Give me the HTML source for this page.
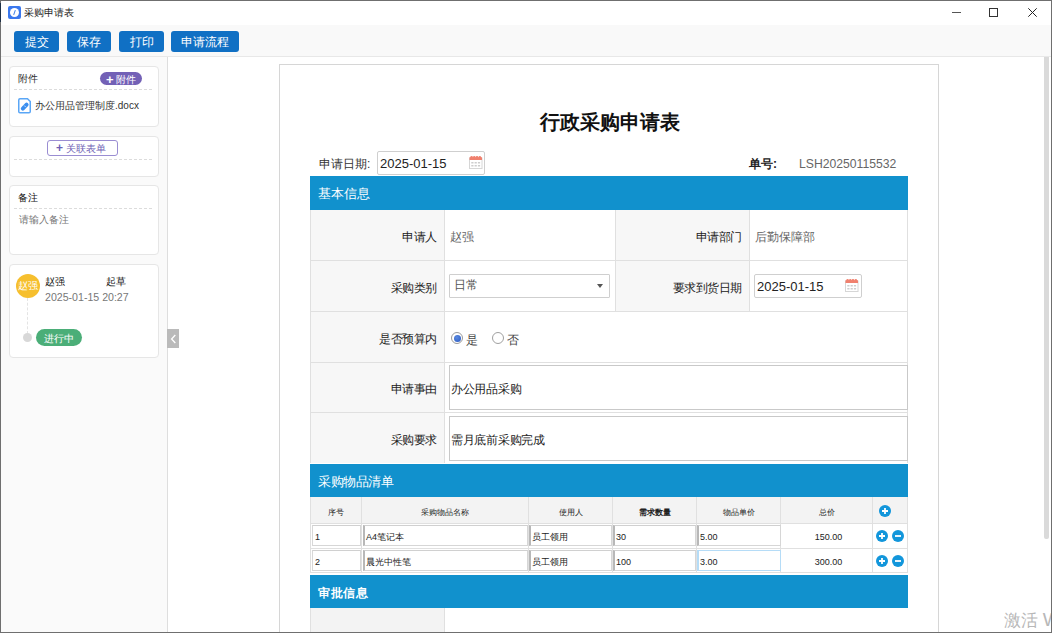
<!DOCTYPE html>
<html><head><meta charset="utf-8">
<style>
*{box-sizing:border-box;margin:0;padding:0}
html,body{width:1052px;height:633px;overflow:hidden;background:#fff}
body{position:relative;font-family:"Liberation Sans",sans-serif;font-size:12px;color:#333}
.a{position:absolute}
.t{position:absolute;white-space:nowrap;line-height:1}
#frame{left:0;top:0;width:1052px;height:633px;border:1px solid #6f6f6f;z-index:50;pointer-events:none}
#titlebar{left:1px;top:1px;width:1049px;height:24px;background:#fff}
#toolbar{left:1px;top:25px;width:1050px;height:32px;background:#f9f9f9;border-bottom:1px solid #e8e8e8}
.btn{position:absolute;top:31px;height:21px;background:#1070c4;border-radius:3px;color:#fff;font-size:12px;font-weight:500;line-height:23px;text-align:center}
#sidebar{left:1px;top:57px;width:167px;height:575px;background:#fafafa;border-right:1px solid #dedede}
.card{position:absolute;left:9px;width:150px;background:#fff;border:1px solid #e6e6e6;border-radius:4px}
.dash{position:absolute;left:4px;right:4px;height:0;border-top:1px dashed #dcdcdc}
#main{left:168px;top:57px;width:882px;height:575px;background:#fff}
#page{left:279px;top:64px;width:660px;height:600px;border:1px solid #d6d6d6;background:#fff}
.hdr{position:absolute;left:310px;width:598px;background:#1191cd;color:#fff;font-size:13px}
.lbl{background:#f7f7f7}
.ln{position:absolute;background:#e0e0e0}
.inp{border:1px solid #cfcfcf;border-radius:2px;background:#fff}
.ta{border:1px solid #c9c9c9;background:#fff}
.r{text-align:right;font-size:12px;letter-spacing:-0.45px;color:#222}
.v{font-size:12px;color:#666}
.th{text-align:center;font-size:8.3px;color:#222;font-weight:500}
.td{font-size:9px;color:#222;margin-top:1px}
.th{top:508px !important}
.ci{border:1px solid #d6d6d6;border-left:2px solid #b8b8b8;border-top-color:#d0d0d0;background:#fff}
</style></head><body>
<div id="frame" class="a"></div>
<div id="titlebar" class="a"></div>
<div class="a" style="left:0;top:3px;width:1px;height:19px;background:#1d3047;z-index:60"></div>
<!-- app icon -->
<div class="a" style="left:8px;top:6px;width:13px;height:13px;background:#3a78ee;border-radius:2px"></div>
<div class="a" style="left:10px;top:8px;width:9px;height:9px;background:#fff;border-radius:50%"></div>
<div class="a" style="left:14px;top:10px;width:1.2px;height:5px;background:#3d7ee8;transform:rotate(20deg)"></div>
<div class="t" style="left:24px;top:8px;font-size:10px;color:#222">采购申请表</div>
<!-- window controls -->
<div class="a" style="left:952px;top:12px;width:9px;height:1.3px;background:#555"></div>
<div class="a" style="left:989px;top:8px;width:9px;height:9px;border:1px solid #333"></div>
<svg class="a" style="left:1027px;top:7px" width="11" height="11" viewBox="0 0 11 11"><path d="M1.3 1.3L9.7 9.7M9.7 1.3L1.3 9.7" stroke="#222" stroke-width="1"/></svg>

<div id="toolbar" class="a"></div>
<div class="btn" style="left:14px;width:45px">提交</div>
<div class="btn" style="left:67px;width:44px">保存</div>
<div class="btn" style="left:119px;width:45px">打印</div>
<div class="btn" style="left:171px;width:68px">申请流程</div>

<div id="sidebar" class="a"></div>
<!-- card1 -->
<div class="card" style="top:66px;height:61px"></div>
<div class="t" style="left:18px;top:74px;color:#333;font-size:10px">附件</div>
<div class="a" style="left:100px;top:72px;width:42px;height:13px;border-radius:7px;background:#7361b6"></div>
<div class="t" style="left:106px;top:73px;color:#fff;font-size:10px;font-weight:500"><b style="font-size:13px;vertical-align:-1px">+</b> 附件</div>
<div class="a" style="left:14px;top:89px;width:140px;height:1px;background:repeating-linear-gradient(90deg,#dcdcdc 0 3px,transparent 3px 5px)"></div>
<svg class="a" style="left:18px;top:98px" width="14" height="16" viewBox="0 0 14 16"><path d="M2 0.75H9.5L12.25 3.5V13.5Q12.25 14.75 11 14.75H2Q0.75 14.75 0.75 13.5V2Q0.75 0.75 2 0.75Z" fill="#fff" stroke="#5aa6f6" stroke-width="1.5"/><path d="M4.8 10.6L8.6 6.6" stroke="#3b8ff0" stroke-width="4" stroke-linecap="round"/><path d="M6.3 7.6L7.6 8.9" stroke="#fff" stroke-width="0.8"/></svg>
<div class="t" style="left:35px;top:101px;color:#333;font-size:10px">办公用品管理制度.docx</div>
<!-- card2 -->
<div class="card" style="top:136px;height:41px"></div>
<div class="a" style="left:47px;top:140px;width:71px;height:16px;border:1px solid #9a8dd2;border-radius:3px;background:#fff"></div>
<div class="t" style="left:56px;top:142px;color:#6f5fb5;font-size:10px"><b style="font-size:12px">+</b> 关联表单</div>
<div class="a" style="left:14px;top:159px;width:140px;height:1px;background:repeating-linear-gradient(90deg,#dcdcdc 0 3px,transparent 3px 5px)"></div>
<!-- card3 -->
<div class="card" style="top:185px;height:70px"></div>
<div class="t" style="left:18px;top:193px;color:#111;font-weight:500;font-size:10px">备注</div>
<div class="a" style="left:14px;top:208px;width:140px;height:1px;background:repeating-linear-gradient(90deg,#dcdcdc 0 3px,transparent 3px 5px)"></div>
<div class="t" style="left:19px;top:215px;color:#777;font-size:10px">请输入备注</div>
<!-- card4 -->
<div class="card" style="top:264px;height:94px"></div>
<div class="a" style="left:16px;top:274px;width:24px;height:24px;border-radius:50%;background:#f6bf2e"></div>
<div class="t" style="left:18px;top:281px;color:#fff;font-size:10px;font-weight:500;letter-spacing:-0.5px">赵强</div>
<div class="a" style="left:27px;top:298px;width:0;height:36px;border-left:1px dashed #e4e4e4"></div>
<div class="a" style="left:23px;top:333px;width:9px;height:9px;border-radius:50%;background:#d8d8d8"></div>
<div class="t" style="left:45px;top:277px;color:#111;font-size:10px;font-weight:500">赵强</div>
<div class="t" style="left:106px;top:277px;color:#111;font-size:10px;font-weight:500">起草</div>
<div class="t" style="left:45px;top:292px;color:#777;font-size:10.6px">2025-01-15 20:27</div>
<div class="a" style="left:36px;top:329px;width:46px;height:17px;border-radius:9px;background:#4bae78"></div>
<div class="t" style="left:44px;top:334px;color:#fff;font-size:10px">进行中</div>
<!-- collapse tab -->
<div class="a" style="left:167px;top:329px;width:12px;height:19px;background:#bababa;z-index:5"></div>
<svg class="a" style="left:167px;top:329px;z-index:6" width="12" height="19" viewBox="0 0 12 19"><path d="M8.3 6L4.6 10L8.3 14" fill="none" stroke="#fff" stroke-width="1.3"/></svg>

<div id="main" class="a"></div>
<div id="page" class="a"></div>
<div class="t" style="left:540px;top:112px;font-size:20px;font-weight:bold;color:#111">行政采购申请表</div>
<div class="t" style="left:319px;top:158px;font-size:12px;color:#333">申请日期:</div>
<div class="a inp" style="left:377px;top:151px;width:108px;height:24px"></div>
<div class="t" style="left:380px;top:157px;font-size:13px;color:#222">2025-01-15</div>
<svg class="a" style="left:469px;top:155px" width="14" height="14" viewBox="0 0 14 14"><rect x="0.5" y="3" width="12.5" height="10.5" fill="#fff" stroke="#d6d6d6"/><rect x="0.5" y="2.3" width="12.5" height="2.7" fill="#f0806e"/><circle cx="2.6" cy="2.2" r="1.3" fill="#f0806e"/><circle cx="5.3" cy="2.2" r="1.3" fill="#f0806e"/><circle cx="8" cy="2.2" r="1.3" fill="#f0806e"/><circle cx="10.8" cy="2.2" r="1.3" fill="#f0806e"/><path d="M2.3 7h2.2v1.6h-2.2zM5.6 7h2.2v1.6h-2.2zM8.9 7h2.2v1.6h-2.2zM2.3 9.9h2.2v1.6h-2.2zM5.6 9.9h2.2v1.6h-2.2zM8.9 9.9h2.2v1.6h-2.2z" fill="#cdcdcd"/></svg>
<div class="t" style="left:749px;top:158px;font-size:12px;color:#222;font-weight:bold">单号:</div>
<div class="t" style="left:799px;top:158px;font-size:12.2px;color:#666">LSH20250115532</div>

<div class="hdr" style="top:176px;height:34px"></div>
<div class="t" style="left:318px;top:188px;font-size:12.8px;color:#fff;font-weight:500">基本信息</div>

<!-- basic info table -->
<div class="a lbl" style="left:310px;top:210px;width:135px;height:253px"></div>
<div class="a lbl" style="left:615px;top:210px;width:135px;height:102px"></div>
<div class="ln" style="left:310px;top:210px;width:1px;height:253px"></div>
<div class="ln" style="left:907px;top:210px;width:1px;height:253px"></div>
<div class="ln" style="left:444px;top:210px;width:1px;height:253px"></div>
<div class="ln" style="left:615px;top:210px;width:1px;height:102px"></div>
<div class="ln" style="left:749px;top:210px;width:1px;height:102px"></div>
<div class="ln" style="left:310px;top:260px;width:598px;height:1px"></div>
<div class="ln" style="left:310px;top:311px;width:598px;height:1px"></div>
<div class="ln" style="left:310px;top:362px;width:598px;height:1px"></div>
<div class="ln" style="left:310px;top:412px;width:598px;height:1px"></div>

<div class="t r" style="right:615px;top:231px">申请人</div>
<div class="t v" style="left:450px;top:231px">赵强</div>
<div class="t r" style="right:310px;top:231px">申请部门</div>
<div class="t v" style="left:755px;top:231px">后勤保障部</div>

<div class="t r" style="right:615px;top:282px">采购类别</div>
<div class="a inp" style="left:449px;top:274px;width:161px;height:24px;border-radius:1px"></div>
<div class="t" style="left:454px;top:279px;font-size:12px;color:#555">日常</div>
<div class="a" style="left:597px;top:284px;width:0;height:0;border-left:3.5px solid transparent;border-right:3.5px solid transparent;border-top:4px solid #555"></div>
<div class="t r" style="right:310px;top:282px">要求到货日期</div>
<div class="a inp" style="left:754px;top:274px;width:108px;height:24px"></div>
<div class="t" style="left:757px;top:280px;font-size:13px;color:#222">2025-01-15</div>
<svg class="a" style="left:845px;top:278px" width="14" height="14" viewBox="0 0 14 14"><rect x="0.5" y="3" width="12.5" height="10.5" fill="#fff" stroke="#d6d6d6"/><rect x="0.5" y="2.3" width="12.5" height="2.7" fill="#f0806e"/><circle cx="2.6" cy="2.2" r="1.3" fill="#f0806e"/><circle cx="5.3" cy="2.2" r="1.3" fill="#f0806e"/><circle cx="8" cy="2.2" r="1.3" fill="#f0806e"/><circle cx="10.8" cy="2.2" r="1.3" fill="#f0806e"/><path d="M2.3 7h2.2v1.6h-2.2zM5.6 7h2.2v1.6h-2.2zM8.9 7h2.2v1.6h-2.2zM2.3 9.9h2.2v1.6h-2.2zM5.6 9.9h2.2v1.6h-2.2zM8.9 9.9h2.2v1.6h-2.2z" fill="#cdcdcd"/></svg>

<div class="t r" style="right:615px;top:333px">是否预算内</div>
<div class="a" style="left:451px;top:332px;width:12px;height:12px;border-radius:50%;border:1px solid #9a9a9a;background:#fff"></div>
<div class="a" style="left:453.5px;top:334.5px;width:7px;height:7px;border-radius:50%;background:radial-gradient(circle at 40% 35%,#5a8ae0,#2a58c0)"></div>
<div class="t" style="left:466px;top:334px;font-size:12px;color:#444">是</div>
<div class="a" style="left:492px;top:332px;width:12px;height:12px;border-radius:50%;border:1px solid #a0a0a0;background:#fff"></div>
<div class="t" style="left:507px;top:334px;font-size:12px;color:#444">否</div>

<div class="t r" style="right:615px;top:383px">申请事由</div>
<div class="a ta" style="left:449px;top:365px;width:459px;height:45px"></div>
<div class="t" style="left:451px;top:383px;font-size:12px;letter-spacing:-0.3px;color:#222">办公用品采购</div>
<div class="t r" style="right:615px;top:434px">采购要求</div>
<div class="a ta" style="left:449px;top:416px;width:459px;height:45px"></div>
<div class="t" style="left:451px;top:434px;font-size:12px;letter-spacing:-0.3px;color:#222">需月底前采购完成</div>

<div class="hdr" style="top:464px;height:33px"></div>
<div class="t" style="left:318px;top:476px;font-size:12.5px;letter-spacing:-0.4px;color:#fff;font-weight:500">采购物品清单</div>

<!-- items table -->
<div class="a" style="left:310px;top:497px;width:598px;height:26px;background:#f3f3f3"></div>
<div class="ln" style="left:310px;top:497px;width:1px;height:76px"></div>
<div class="ln" style="left:907px;top:497px;width:1px;height:76px"></div>
<div class="ln" style="left:361px;top:497px;width:1px;height:76px"></div>
<div class="ln" style="left:528px;top:497px;width:1px;height:76px"></div>
<div class="ln" style="left:612px;top:497px;width:1px;height:76px"></div>
<div class="ln" style="left:696px;top:497px;width:1px;height:76px"></div>
<div class="ln" style="left:780px;top:497px;width:1px;height:76px"></div>
<div class="ln" style="left:872px;top:497px;width:1px;height:76px"></div>
<div class="ln" style="left:310px;top:523px;width:598px;height:1px"></div>
<div class="ln" style="left:310px;top:548px;width:598px;height:1px"></div>
<div class="ln" style="left:310px;top:572px;width:598px;height:1px"></div>

<div class="t th" style="left:311px;width:50px;top:507px">序号</div>
<div class="t th" style="left:362px;width:166px;top:507px">采购物品名称</div>
<div class="t th" style="left:529px;width:83px;top:507px">使用人</div>
<div class="t th" style="left:613px;width:83px;top:507px;font-weight:bold">需求数量</div>
<div class="t th" style="left:697px;width:83px;top:507px">物品单价</div>
<div class="t th" style="left:781px;width:91px;top:507px">总价</div>
<svg class="a" style="left:879px;top:505px" width="12" height="12" viewBox="0 0 12 12"><circle cx="6" cy="6" r="6" fill="#1296db"/><path d="M3 6H9M6 3V9" stroke="#fff" stroke-width="1.8"/></svg>

<div class="a ci" style="left:312px;top:525px;width:49px;height:21px;border-left:1px solid #d8d8d8"></div>
<div class="a ci" style="left:363px;top:525px;width:165px;height:21px"></div>
<div class="a ci" style="left:529px;top:525px;width:83px;height:21px"></div>
<div class="a ci" style="left:613px;top:525px;width:83px;height:21px"></div>
<div class="a ci" style="left:697px;top:525px;width:84px;height:21px"></div>
<div class="t td" style="left:315px;top:532px">1</div>
<div class="t td" style="left:366px;top:532px">A4笔记本</div>
<div class="t td" style="left:532px;top:532px">员工领用</div>
<div class="t td" style="left:616px;top:532px">30</div>
<div class="t td" style="left:700px;top:532px">5.00</div>
<div class="t td" style="left:783px;width:91px;text-align:center;top:532px">150.00</div>
<svg class="a" style="left:876px;top:530px" width="12" height="12" viewBox="0 0 12 12"><circle cx="6" cy="6" r="6" fill="#1296db"/><path d="M3 6H9M6 3V9" stroke="#fff" stroke-width="1.8"/></svg>
<svg class="a" style="left:892px;top:530px" width="12" height="12" viewBox="0 0 12 12"><circle cx="6" cy="6" r="6" fill="#1296db"/><path d="M3 6H9" stroke="#fff" stroke-width="1.8"/></svg>

<div class="a ci" style="left:312px;top:550px;width:49px;height:21px;border-left:1px solid #d8d8d8"></div>
<div class="a ci" style="left:363px;top:550px;width:165px;height:21px"></div>
<div class="a ci" style="left:529px;top:550px;width:83px;height:21px"></div>
<div class="a ci" style="left:613px;top:550px;width:83px;height:21px"></div>
<div class="a ci" style="left:697px;top:550px;width:84px;height:21px;border-color:#b5dcf7"></div>
<div class="t td" style="left:315px;top:557px">2</div>
<div class="t td" style="left:366px;top:557px">晨光中性笔</div>
<div class="t td" style="left:532px;top:557px">员工领用</div>
<div class="t td" style="left:616px;top:557px">100</div>
<div class="t td" style="left:700px;top:557px">3.00</div>
<div class="t td" style="left:783px;width:91px;text-align:center;top:557px">300.00</div>
<svg class="a" style="left:876px;top:555px" width="12" height="12" viewBox="0 0 12 12"><circle cx="6" cy="6" r="6" fill="#1296db"/><path d="M3 6H9M6 3V9" stroke="#fff" stroke-width="1.8"/></svg>
<svg class="a" style="left:892px;top:555px" width="12" height="12" viewBox="0 0 12 12"><circle cx="6" cy="6" r="6" fill="#1296db"/><path d="M3 6H9" stroke="#fff" stroke-width="1.8"/></svg>

<div class="hdr" style="top:575px;height:33px"></div>
<div class="t" style="left:318px;top:587px;font-size:12px;letter-spacing:0.5px;color:#fff;font-weight:bold">审批信息</div>
<div class="a" style="left:310px;top:608px;width:135px;height:24px;background:#f3f3f3"></div>
<div class="ln" style="left:310px;top:608px;width:1px;height:24px"></div>
<div class="ln" style="left:444px;top:608px;width:1px;height:24px"></div>

<!-- scrollbar -->
<div class="a" style="left:1044px;top:57px;width:5px;height:482px;background:#dadada;border-radius:0 0 2px 2px"></div>
<div class="t" style="left:1004px;top:610px;font-size:17px;color:#b8b8b8">激活 <span style="font-size:19px">W</span></div>

</body></html>
